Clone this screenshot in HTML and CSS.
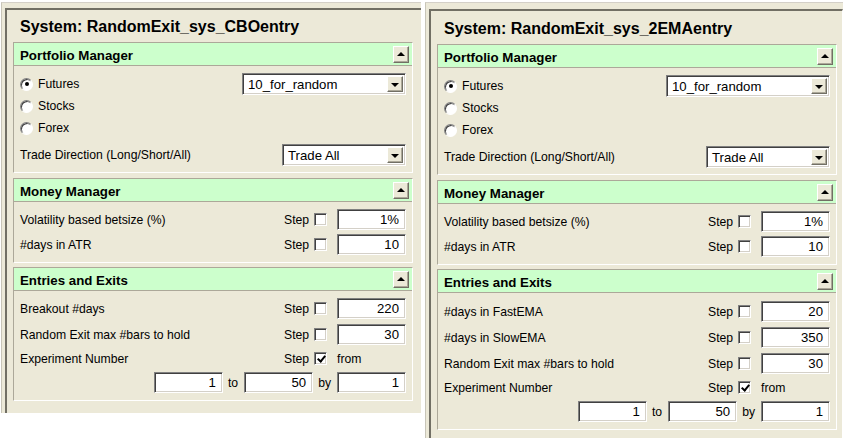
FILE: index.html
```html
<!DOCTYPE html>
<html lang="en">

<head>
  <meta charset="UTF-8" />
  <title>System settings</title>
  <link rel="stylesheet" href="styles.css">
</head>

<body>
  <div class="desk">
    <!-- left system -->
    <div class="window window-left">
      <div class="pane">
        <h1 class="title">System: RandomExit_sys_CBOentry</h1>

        <section class="group">
          <div class="group-head"><span>Portfolio Manager</span><span class="btn up"></span></div>
          <div class="group-body">
            <div class="row">
              <label class="opt"><span class="radio on"></span>Futures</label>
              <div class="select wide"><span class="sel-text">10_for_random</span><span class="btn down"></span></div>
            </div>
            <div class="row"><label class="opt"><span class="radio"></span>Stocks</label></div>
            <div class="row"><label class="opt"><span class="radio"></span>Forex</label></div>
            <div class="row row-dir">
              <span class="label">Trade Direction (Long/Short/All)</span>
              <div class="select narrow"><span class="sel-text">Trade All</span><span class="btn down"></span></div>
            </div>
          </div>
        </section>

        <section class="group group-mm">
          <div class="group-head"><span>Money Manager</span><span class="btn up"></span></div>
          <div class="group-body params">
            <div class="row">
              <span class="label">Volatility based betsize (%)</span>
              <span class="step">Step</span><span class="check"></span><span class="field">1%</span>
            </div>
            <div class="row">
              <span class="label">#days in ATR</span>
              <span class="step">Step</span><span class="check"></span><span class="field">10</span>
            </div>
          </div>
        </section>

        <section class="group group-ee">
          <div class="group-head"><span>Entries and Exits</span><span class="btn up"></span></div>
          <div class="group-body params">
            <div class="row">
              <span class="label">Breakout #days</span>
              <span class="step">Step</span><span class="check"></span><span class="field">220</span>
            </div>
            <div class="row">
              <span class="label">Random Exit max #bars to hold</span>
              <span class="step">Step</span><span class="check"></span><span class="field">30</span>
            </div>
            <div class="row row-exp">
              <span class="label">Experiment Number</span>
              <span class="step">Step</span><span class="check on"></span><span class="from">from</span>
            </div>
            <div class="row row-range">
              <span class="field">1</span><span class="sep">to</span>
              <span class="field">50</span><span class="sep">by</span>
              <span class="field">1</span>
            </div>
          </div>
        </section>
      </div>
    </div>

    <!-- right system -->
    <div class="window window-right">
      <div class="pane">
        <h1 class="title">System: RandomExit_sys_2EMAentry</h1>

        <section class="group">
          <div class="group-head"><span>Portfolio Manager</span><span class="btn up"></span></div>
          <div class="group-body">
            <div class="row">
              <label class="opt"><span class="radio on"></span>Futures</label>
              <div class="select wide"><span class="sel-text">10_for_random</span><span class="btn down"></span></div>
            </div>
            <div class="row"><label class="opt"><span class="radio"></span>Stocks</label></div>
            <div class="row"><label class="opt"><span class="radio"></span>Forex</label></div>
            <div class="row row-dir">
              <span class="label">Trade Direction (Long/Short/All)</span>
              <div class="select narrow"><span class="sel-text">Trade All</span><span class="btn down"></span></div>
            </div>
          </div>
        </section>

        <section class="group group-mm">
          <div class="group-head"><span>Money Manager</span><span class="btn up"></span></div>
          <div class="group-body params">
            <div class="row">
              <span class="label">Volatility based betsize (%)</span>
              <span class="step">Step</span><span class="check"></span><span class="field">1%</span>
            </div>
            <div class="row">
              <span class="label">#days in ATR</span>
              <span class="step">Step</span><span class="check"></span><span class="field">10</span>
            </div>
          </div>
        </section>

        <section class="group group-ee">
          <div class="group-head"><span>Entries and Exits</span><span class="btn up"></span></div>
          <div class="group-body params">
            <div class="row">
              <span class="label">#days in FastEMA</span>
              <span class="step">Step</span><span class="check"></span><span class="field">20</span>
            </div>
            <div class="row">
              <span class="label">#days in SlowEMA</span>
              <span class="step">Step</span><span class="check"></span><span class="field">350</span>
            </div>
            <div class="row">
              <span class="label">Random Exit max #bars to hold</span>
              <span class="step">Step</span><span class="check"></span><span class="field">30</span>
            </div>
            <div class="row row-exp">
              <span class="label">Experiment Number</span>
              <span class="step">Step</span><span class="check on"></span><span class="from">from</span>
            </div>
            <div class="row row-range">
              <span class="field">1</span><span class="sep">to</span>
              <span class="field">50</span><span class="sep">by</span>
              <span class="field">1</span>
            </div>
          </div>
        </section>
      </div>
    </div>
  </div>
</body>

</html>
```

FILE: styles.css
```css
/* Reset & base */
* {
  box-sizing: border-box;
  margin: 0;
  padding: 0;
}

body {
  background: #fff;
  font-family: 'Liberation Sans', Arial, sans-serif;
  font-size: 12.2px;
  color: #000;
}

.desk {
  display: flex;
  align-items: flex-start;
  padding-top: 2px;
}

/* Windows */
.window {
  background: #ece9d8;
  border-top: 1px solid #d4d0c8;
  border-left: 1px solid #c8c5b8;
}

.window-left {
  width: 420px;
  height: 411px;
  margin-left: 1px;
  margin-right: 4px;
}

.window-right {
  flex: 1;
  height: 436px;
}

.pane {
  height: calc(100% - 5px);
  margin: 5px 0 0 3px;
  padding-left: 6px;
  border-top: 2px solid #716f64;
  border-left: 2px solid #716f64;
}

.window-right .pane {
  margin-top: 6px;
  padding-top: 1px;
  border-right: 1px solid #fff;
}

.title {
  font-size: 16px;
  font-weight: bold;
  line-height: 20px;
  padding: 7px 0 5px 7px;
}

/* Groups */
.group {
  width: 400px;
  border: 1px solid;
  border-color: #aca899 #fff #fff #aca899;
}

.group-mm {
  margin-top: 5px;
}

.group-ee {
  margin-top: 4px;
}

.group-head {
  display: flex;
  align-items: center;
  justify-content: space-between;
  height: 23px;
  padding: 0 3px 0 6px;
  background: #ccffcc;
  border-bottom: 1px solid #aca899;
  font-size: 13.3px;
  font-weight: bold;
}

.group-head span:first-child {
  padding-top: 2px;
}

.group-body {
  display: flex;
  flex-direction: column;
  padding: 7px 6px 6px 6px;
}

.params {
  gap: 4px;
  padding-bottom: 7px;
}

.group-ee .params {
  gap: 5px;
  padding-bottom: 7px;
}

.window-right .group-ee .params {
  padding-top: 8px;
}

.row {
  display: flex;
  align-items: center;
  height: 22px;
}

.params .row {
  height: 21px;
}

.params .row-exp {
  height: 17px;
}

.row-dir {
  margin-top: 5px;
}

.row-range {
  justify-content: flex-end;
}

.label {
  flex: 1;
}

.opt {
  display: flex;
  align-items: center;
  gap: 5px;
}

/* Classic controls */
.radio {
  position: relative;
  width: 13px;
  height: 13px;
  border-radius: 50%;
  background: #fff;
  border: 1px solid;
  border-color: #808080 #fff #fff #808080;
  box-shadow: inset 1px 1px 0 #404040;
}

.radio.on::after {
  content: '';
  position: absolute;
  left: 3.5px;
  top: 3.5px;
  width: 4px;
  height: 4px;
  border-radius: 50%;
  background: #000;
}

.select {
  display: flex;
  height: 22px;
  margin-left: auto;
  background: #fff;
  border: 1px solid;
  border-color: #808080 #fff #fff #808080;
  box-shadow: inset 1px 1px 0 #404040, inset -1px -1px 0 #d4d0c8;
  padding: 2px;
}

.select.wide {
  width: 164px;
}

.select.narrow {
  width: 124px;
}

.sel-text {
  flex: 1;
  padding-left: 3px;
  font-size: 13.2px;
  line-height: 18px;
}

.btn {
  position: relative;
  display: block;
  width: 16px;
  background: #ece9d8;
  border: 1px solid;
  border-color: #fff #716f64 #716f64 #fff;
  box-shadow: inset -1px -1px 0 #aca899;
}

.btn.up {
  height: 17px;
}

.btn::after {
  content: '';
  position: absolute;
  left: 3px;
  width: 0;
  height: 0;
  border-left: 4px solid transparent;
  border-right: 4px solid transparent;
}

.btn.up::after {
  top: 5px;
  border-bottom: 4px solid #000;
}

.btn.down::after {
  top: 6px;
  border-top: 4px solid #000;
}

.step {
  width: 30px;
}

.check {
  position: relative;
  width: 13px;
  height: 13px;
  margin-right: 10px;
  background: #fff;
  border: 1px solid;
  border-color: #808080 #fff #fff #808080;
  box-shadow: inset 1px 1px 0 #404040, inset -1px -1px 0 #d4d0c8;
}

.check.on::after {
  content: '';
  position: absolute;
  left: 4px;
  top: 1px;
  width: 3px;
  height: 6px;
  border-right: 2px solid #000;
  border-bottom: 2px solid #000;
  transform: rotate(40deg);
}

.field {
  display: flex;
  align-items: center;
  justify-content: flex-end;
  width: 69px;
  height: 21px;
  padding-right: 6px;
  background: #fff;
  border: 1px solid;
  border-color: #808080 #fff #fff #808080;
  box-shadow: inset 1px 1px 0 #404040, inset -1px -1px 0 #d4d0c8;
  font-size: 13.2px;
}

.from {
  width: 69px;
}

.sep {
  padding: 0 6px 0 5px;
}
```
